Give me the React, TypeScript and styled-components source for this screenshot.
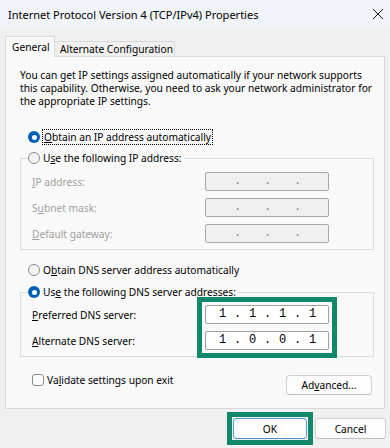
import React from 'react'
import styled, { createGlobalStyle, css } from 'styled-components'

const GlobalStyle = createGlobalStyle`
  html, body { margin: 0; padding: 0; }
  body {
    width: 390px;
    height: 448px;
    overflow: hidden;
    background: #f0f0f0;
    font-family: "Noto Sans", "Open Sans", sans-serif;
    font-size: 10.2px;
    color: #000;
  }
`

const Window = styled.div`
  width: 390px;
  height: 448px;
  display: flex;
  flex-direction: column;
  background: #f0f0f0;
`

const TitleBar = styled.div`
  height: 28px;
  flex: none;
  display: flex;
  align-items: center;
  justify-content: space-between;
  padding: 0 6px 0 8px;
  background: #f1f4f8;
  font-size: 11px;
`

const CloseIcon = () => (
  <svg width="12" height="12" viewBox="0 0 12 12">
    <path d="M1 1 L11 11 M11 1 L1 11" stroke="#1a1a1a" strokeWidth="1" fill="none" />
  </svg>
)

const TabStrip = styled.div`
  display: flex;
  align-items: flex-end;
  margin: 8px 5px 0;
  height: 20px;
  position: relative;
  z-index: 1;
`

const Tab = styled.div<{ $active?: boolean }>`
  box-sizing: border-box;
  display: flex;
  align-items: center;
  border: 1px solid #d9d9d9;
  border-bottom: none;
  ${p => p.$active
    ? css`
      height: 21px;
      width: 50px;
      padding: 0 0 0 6px;
      background: #f9f9f9;
      margin-bottom: -1px;
    `
    : css`
      height: 15px;
      width: 120px;
      padding: 0 0 0 5px;
      background: #f0f0f0;
      border-left: none;
    `}
`

const Panel = styled.div`
  margin: 0 5px;
  border: 1px solid #d9d9d9;
  background: #f9f9f9;
  padding: 12px 10px 13px 14px;
  display: flex;
  flex-direction: column;
`

const Intro = styled.p`
  margin: 0;
  line-height: 13px;
`

const Acc = styled.span`
  text-decoration: underline;
  text-underline-offset: 1px;
`

const Choice = styled.label<{ $indent?: boolean; $gap?: number }>`
  display: flex;
  align-items: center;
  gap: 3px;
  height: 14px;
  padding-left: ${p => (p.$indent ? 8 : 0)}px;
  margin-top: ${p => p.$gap ?? 0}px;
  white-space: nowrap;
`

const RadioDot = styled.span<{ $on?: boolean }>`
  box-sizing: border-box;
  flex: none;
  width: 12px;
  height: 12px;
  border-radius: 50%;
  ${p => p.$on
    ? css`
      background: #005fb8;
      display: flex;
      align-items: center;
      justify-content: center;
      &::after {
        content: '';
        width: 5px;
        height: 5px;
        border-radius: 50%;
        background: #fff;
      }
    `
    : css`
      background: #f4f4f4;
      border: 1px solid #8a8a8a;
    `}
`

const Focused = styled.span`
  outline: 1px dotted #000;
  outline-offset: 0;
  padding: 0 1px;
`

const Group = styled.fieldset<{ $top: number; $padTop: number }>`
  margin: ${p => p.$top}px 0 0;
  padding: ${p => p.$padTop}px 11px 6px 11px;
  border: 1px solid #dcdcdc;
  min-width: 0;
`

const Legend = styled.legend`
  padding: 0 2px 0 0;
  margin-left: -4px;
  line-height: 14px;
`

const FieldGrid = styled.div<{ $rows: number }>`
  display: grid;
  grid-template-columns: 173px 124px;
  grid-template-rows: repeat(${p => p.$rows}, 19px);
  row-gap: 7px;
`

const FieldLabel = styled.span<{ $disabled?: boolean }>`
  grid-column: 1;
  display: flex;
  align-items: center;
  color: ${p => (p.$disabled ? '#a0a0a0' : '#000')};
`

const InputStack = styled.div<{ $rows: number; $mark?: boolean }>`
  grid-column: 2;
  grid-row: 1 / span ${p => p.$rows};
  display: flex;
  flex-direction: column;
  gap: 7px;
  ${p => p.$mark && css`
    outline: 5px solid #11876b;
    outline-offset: 3px;
  `}
`

const IpBox = styled.div<{ $disabled?: boolean }>`
  box-sizing: border-box;
  height: 19px;
  display: flex;
  align-items: center;
  padding-left: 5px;
  border: 1px solid ${p => (p.$disabled ? '#a9a9a9' : '#a0a0a0')};
  border-radius: 2px;
  background: ${p => (p.$disabled ? '#f0f0f0' : '#fff')};
  font-family: "Liberation Mono", "DejaVu Sans Mono", monospace;
  font-size: 12px;
  line-height: 17px;
  color: ${p => (p.$disabled ? '#888' : '#000')};
`

const Octet = styled.span`
  width: 23px;
  text-align: center;
`

const Dot = styled.span`
  width: 7px;
  text-align: center;
`

const BottomRow = styled.div`
  display: flex;
  align-items: flex-start;
  justify-content: space-between;
  margin-top: 16px;
  padding-left: 12px;
  padding-right: 2px;
`

const CheckBox = styled.span`
  box-sizing: border-box;
  flex: none;
  width: 12px;
  height: 12px;
  border: 1px solid #8a8a8a;
  border-radius: 3px;
  background: #fbfbfb;
`

const Button = styled.button<{ $w: number; $h?: number; $primary?: boolean }>`
  box-sizing: border-box;
  width: ${p => p.$w}px;
  height: ${p => p.$h ?? 21}px;
  padding: 0;
  border: 1px solid ${p => (p.$primary ? '#5b98d6' : '#d0d0d0')};
  border-bottom-color: ${p => (p.$primary ? '#4f8ed0' : '#bdbdbd')};
  border-radius: 4px;
  background: #fdfdfd;
  font-family: inherit;
  font-size: 10.2px;
  color: #000;
`

const AdvancedButton = styled(Button)`
  margin-top: 2px;
`

/* annotation frame drawn over the OK button */
const Marked = styled.span`
  position: relative;
  display: flex;
  &::after {
    content: '';
    position: absolute;
    inset: -6px;
    border: 5px solid #11876b;
    pointer-events: none;
  }
`

const Footer = styled.div`
  display: flex;
  justify-content: flex-end;
  gap: 8px;
  padding: 9px 4px 0 0;
`

function IpField ({ value, disabled }: { value?: string[]; disabled?: boolean }): JSX.Element {
  const parts = value ?? ['', '', '', '']
  return (
    <IpBox $disabled={disabled}>
      {parts.map((p, i) => (
        <React.Fragment key={i}>
          {i > 0 && <Dot>.</Dot>}
          <Octet>{p}</Octet>
        </React.Fragment>
      ))}
    </IpBox>
  )
}

export default function App (): JSX.Element {
  return (
    <Window>
      <GlobalStyle />
      <TitleBar>
        <span>Internet Protocol Version 4 (TCP/IPv4) Properties</span>
        <CloseIcon />
      </TitleBar>

      <TabStrip>
        <Tab $active>General</Tab>
        <Tab>Alternate Configuration</Tab>
      </TabStrip>

      <Panel>
        <Intro>
          You can get IP settings assigned automatically if your network supports
          this capability. Otherwise, you need to ask your network administrator
          for the appropriate IP settings.
        </Intro>

        <Choice $indent $gap={22}>
          <RadioDot $on />
          <Focused><Acc>O</Acc>btain an IP address automatically</Focused>
        </Choice>

        <Group $top={7} $padTop={7}>
          <Legend>
            <Choice>
              <RadioDot />
              <span>U<Acc>s</Acc>e the following IP address:</span>
            </Choice>
          </Legend>
          <FieldGrid $rows={3}>
            <FieldLabel $disabled><span><Acc>I</Acc>P address:</span></FieldLabel>
            <FieldLabel $disabled><span>S<Acc>u</Acc>bnet mask:</span></FieldLabel>
            <FieldLabel $disabled><span><Acc>D</Acc>efault gateway:</span></FieldLabel>
            <InputStack $rows={3}>
              <IpField disabled />
              <IpField disabled />
              <IpField disabled />
            </InputStack>
          </FieldGrid>
        </Group>

        <Choice $indent $gap={13}>
          <RadioDot />
          <span>O<Acc>b</Acc>tain DNS server address automatically</span>
        </Choice>

        <Group $top={8} $padTop={6}>
          <Legend>
            <Choice>
              <RadioDot $on />
              <span>Us<Acc>e</Acc> the following DNS server addresses:</span>
            </Choice>
          </Legend>
          <FieldGrid $rows={2}>
            <FieldLabel><span><Acc>P</Acc>referred DNS server:</span></FieldLabel>
            <FieldLabel><span><Acc>A</Acc>lternate DNS server:</span></FieldLabel>
            <InputStack $rows={2} $mark>
              <IpField value={['1', '1', '1', '1']} />
              <IpField value={['1', '0', '0', '1']} />
            </InputStack>
          </FieldGrid>
        </Group>

        <BottomRow>
          <Choice>
            <CheckBox />
            <span>Va<Acc>l</Acc>idate settings upon exit</span>
          </Choice>
          <AdvancedButton $w={86} $h={20}>Ad<Acc>v</Acc>anced...</AdvancedButton>
        </BottomRow>
      </Panel>

      <Footer>
        <Marked>
          <Button $w={74} $primary>OK</Button>
        </Marked>
        <Button $w={71}>Cancel</Button>
      </Footer>
    </Window>
  )
}
